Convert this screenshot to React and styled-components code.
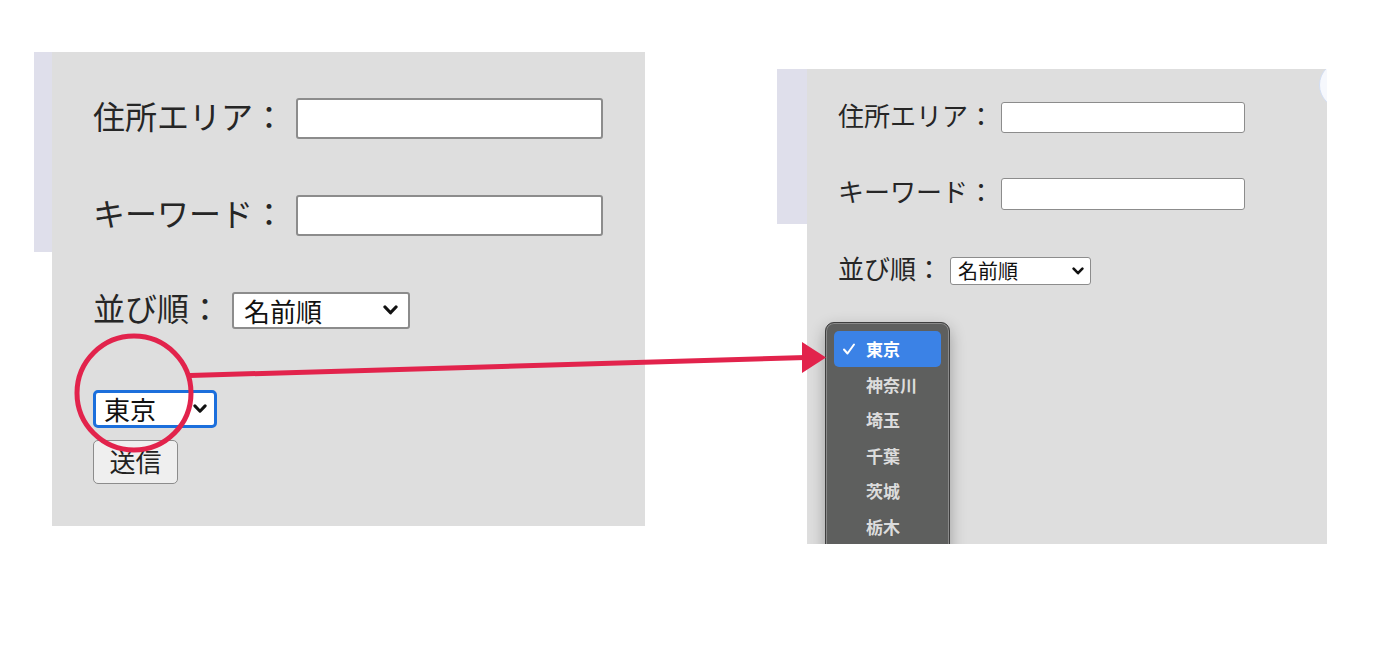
import React from 'react'
import styled, { createGlobalStyle } from 'styled-components'

const GlobalStyle = createGlobalStyle`
  body {
    margin: 0;
    background: #ffffff;
    font-family: "Noto Sans CJK JP", "Noto Sans", sans-serif;
  }
`

const Page = styled.div`
  position: relative;
  width: 1400px;
  height: 668px;
  display: flex;
  align-items: flex-start;
  overflow: hidden;
`

const Shot = styled.div`
  display: flex;
  align-items: flex-start;
  margin-left: ${p => p.$ml}px;
  margin-top: ${p => p.$mt}px;
`

const Strip = styled.div`
  width: ${p => p.$w}px;
  height: ${p => p.$h}px;
  background: #dfdfeb;
`

const Panel = styled.div`
  position: relative;
  overflow: hidden;
  box-sizing: border-box;
  width: ${p => p.$w}px;
  height: ${p => p.$h}px;
  padding: ${p => p.$pt}px 0 0 ${p => p.$pl}px;
  background: #dedede;
  display: flex;
  flex-direction: column;
  align-items: flex-start;
`

const Field = styled.div`
  display: flex;
  align-items: center;
  gap: ${p => p.$gap}px;
  height: ${p => p.$h}px;
  margin-bottom: ${p => p.$mb || 0}px;
`

const Label = styled.span`
  font-size: ${p => p.$fs}px;
  line-height: 1;
  padding-bottom: ${p => p.$lift * 2}px;
  color: #262626;
  white-space: nowrap;
`

const TextInput = styled.input`
  box-sizing: border-box;
  width: ${p => p.$w}px;
  height: ${p => p.$h}px;
  border: ${p => p.$bw}px solid #8c8c8c;
  border-radius: 3px;
  background: #ffffff;
  margin: 0;
  padding: 0;
`

const SelectBox = styled.div`
  box-sizing: border-box;
  width: ${p => p.$w}px;
  height: ${p => p.$h}px;
  margin-top: ${p => p.$mt || 0}px;
  padding: 0 ${p => p.$pr}px 0 ${p => p.$pl}px;
  display: flex;
  align-items: center;
  justify-content: space-between;
  background: #ffffff;
  border: ${p => (p.$focus ? '3px solid #1c6fdc' : `${p.$bw}px solid #8c8c8c`)};
  border-radius: ${p => (p.$focus ? 5 : 3)}px;
  font-size: ${p => p.$fs}px;
  line-height: 1;
  color: #111;
`

const Chevron = styled.svg`
  flex: none;
`

const SubmitButton = styled.button`
  box-sizing: border-box;
  width: 85px;
  height: 44px;
  margin-top: 12px;
  padding: 0 0 3px;
  background: #efefef;
  border: 1.5px solid #8c8c8c;
  border-radius: 5px;
  font-family: inherit;
  font-size: 26px;
  color: #222;
`

const Menu = styled.div`
  position: absolute;
  left: 18px;
  top: 253px;
  width: 125px;
  height: 260px;
  box-sizing: border-box;
  padding: 8px 8px;
  background: #5e5f5e;
  border: 1px solid #3e3e3e;
  border-radius: 9px;
  box-shadow: 0 0 0 1px #8a8a8a inset, 0 6px 16px rgba(0, 0, 0, 0.3);
`

const MenuItem = styled.div`
  height: 35.5px;
  display: flex;
  align-items: center;
  border-radius: 5px;
  background: ${p => (p.$active ? '#3b82e6' : 'transparent')};
  color: ${p => (p.$active ? '#ffffff' : '#dcdcdc')};
  font-size: 17px;
  font-weight: 700;
`

const CheckSlot = styled.span`
  width: 32px;
  flex: none;
  display: flex;
  padding-left: 8px;
  box-sizing: border-box;
`

const Corner = styled.div`
  position: absolute;
  left: 512px;
  top: -8px;
  width: 46px;
  height: 46px;
  border-radius: 50%;
  background: #f6f8fd;
  border: 1px solid #d3def3;
`

const Overlay = styled.svg`
  position: absolute;
  left: 0;
  top: 0;
  pointer-events: none;
`

const ChevronIcon = ({ size }) => (
  <Chevron width={size} height={size * 0.7} viewBox="0 0 12 8.4">
    <polyline points="1.6,1.6 6,6.2 10.4,1.6" fill="none" stroke="#111" strokeWidth="2.6" strokeLinecap="round" strokeLinejoin="round" />
  </Chevron>
)

const prefectures = ['東京', '神奈川', '埼玉', '千葉', '茨城', '栃木']

function App() {
  return (
    <Page>
      <GlobalStyle />
      <Shot $ml={34} $mt={52}>
        <Strip $w={18} $h={200} />
        <Panel $w={593} $h={474} $pt={46} $pl={41}>
          <Field $gap={11} $h={41} $mb={56}>
            <Label $fs={32} $lift={4}>住所エリア：</Label>
            <TextInput $w={307} $h={41} $bw={2} />
          </Field>
          <Field $gap={11} $h={41} $mb={56}>
            <Label $fs={32} $lift={4}>キーワード：</Label>
            <TextInput $w={307} $h={41} $bw={2} />
          </Field>
          <Field $gap={11} $h={37}>
            <Label $fs={32} $lift={4}>並び順：</Label>
            <SelectBox $w={178} $h={37} $bw={2} $fs={26} $pl={10} $pr={10}>
              名前順
              <ChevronIcon size={15} />
            </SelectBox>
          </Field>
          <SelectBox $focus $mt={61} $w={124} $h={38} $fs={26} $pl={8} $pr={7}>
            東京
            <ChevronIcon size={14} />
          </SelectBox>
          <SubmitButton>送信</SubmitButton>
        </Panel>
      </Shot>

      <Shot $ml={132} $mt={69}>
        <Strip $w={30} $h={155} />
        <Panel $w={520} $h={475} $pt={33} $pl={31}>
          <Field $gap={7} $h={31} $mb={45}>
            <Label $fs={26} $lift={3}>住所エリア：</Label>
            <TextInput $w={244} $h={31} $bw={1.5} />
          </Field>
          <Field $gap={7} $h={32} $mb={47}>
            <Label $fs={26} $lift={3}>キーワード：</Label>
            <TextInput $w={244} $h={32} $bw={1.5} />
          </Field>
          <Field $gap={8} $h={28}>
            <Label $fs={26} $lift={3}>並び順：</Label>
            <SelectBox $w={141} $h={28} $bw={1.5} $fs={20} $pl={7} $pr={6}>
              名前順
              <ChevronIcon size={12} />
            </SelectBox>
          </Field>
          <Menu>
            {prefectures.map((name, i) => (
              <MenuItem key={name} $active={i === 0}>
                <CheckSlot>
                  {i === 0 && (
                    <svg width="14" height="14" viewBox="0 0 14 14">
                      <polyline points="2,7.5 5.5,11.5 12,2.5" fill="none" stroke="#fff" strokeWidth="2" strokeLinecap="round" strokeLinejoin="round" />
                    </svg>
                  )}
                </CheckSlot>
                {name}
              </MenuItem>
            ))}
          </Menu>
          <Corner />
        </Panel>
      </Shot>

      <Overlay width="1400" height="668" viewBox="0 0 1400 668">
        <ellipse cx="134" cy="393" rx="57" ry="57" fill="none" stroke="#e2234c" strokeWidth="5" />
        <line x1="190" y1="375.5" x2="806" y2="357.5" stroke="#e2234c" strokeWidth="5" />
        <polygon points="802,342 826,357.5 802,373" fill="#e2234c" />
      </Overlay>
    </Page>
  )
}

export default App
